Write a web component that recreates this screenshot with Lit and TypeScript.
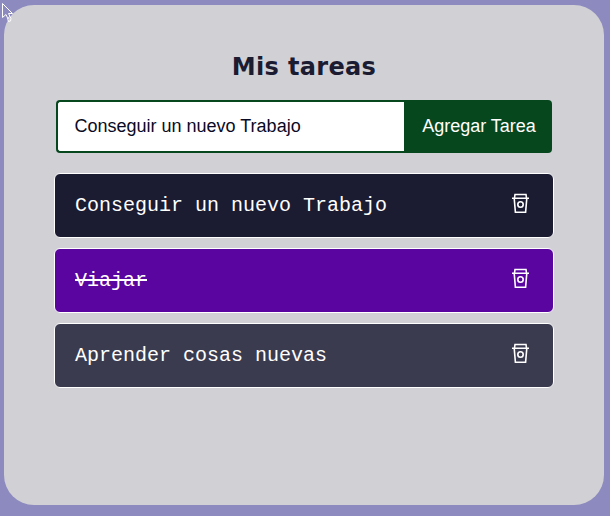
import { LitElement, html, css } from "lit";
import { customElement, property, state } from "lit/decorators.js";
import { classMap } from "lit/directives/class-map.js";

interface Task {
  text: string;
  tone: "navy" | "purple" | "slate";
  done: boolean;
}

@customElement("task-item")
class TaskItem extends LitElement {
  @property({ attribute: false }) task!: Task;

  static styles = css`
    :host { display: block; }
    .item {
      box-sizing: border-box;
      height: 65px;
      display: flex;
      align-items: center;
      justify-content: space-between;
      padding: 0 19px 0 20px;
      border: 1px solid #fff;
      border-radius: 6px;
      color: #fff;
    }
    .navy { background: #1b1b32; }
    .purple { background: #5a05a0; }
    .slate { background: #3b3b4f; }
    .text {
      font: 20px/24px "Courier New", "Liberation Mono", monospace;
      white-space: pre;
    }
    .done .text { text-decoration: line-through; }
    .remove {
      display: flex;
      padding: 0;
      margin: 0 2px 5px 0;
      border: 0;
      background: none;
      color: inherit;
    }
    svg { display: block; }
  `;

  render() {
    const { text, tone, done } = this.task;
    return html`
      <div class=${classMap({ item: true, [tone]: true, done })}>
        <span class="text">${text}</span>
        <button class="remove" aria-label="Eliminar">
          <svg width="24" height="24" viewBox="0 0 24 24" fill="none" stroke="currentColor" stroke-width="1.6">
            <path d="M4 7.300h17M6.500 7 7 3.500h11l.5 3.500M6.200 7.300l1.200 14h10.200l1.200-14" />
            <circle cx="12.500" cy="13.500" r="2.700" />
          </svg>
        </button>
      </div>
    `;
  }
}

@customElement("app-root")
class AppRoot extends LitElement {
  @state() private tasks: Task[] = [
    { text: "Conseguir un nuevo Trabajo", tone: "navy", done: false },
    { text: "Viajar", tone: "purple", done: true },
    { text: "Aprender cosas nuevas", tone: "slate", done: false },
  ];

  static styles = css`
    :host {
      display: block;
      position: relative;
      box-sizing: border-box;
      width: 610px;
      height: 516px;
      padding: 5px 6px 11px 4px;
      background: #8c8abe;
      overflow: hidden;
    }
    .card {
      box-sizing: border-box;
      height: 500px;
      padding: 47px 50px 0;
      border-radius: 30px;
      background: #d0d0d5;
    }
    h1 {
      margin: 0;
      font: bold 24px/30px "DejaVu Sans", Verdana, sans-serif;
      letter-spacing: 0.35px;
      text-align: center;
      color: #1b1b32;
    }
    .form { display: flex; height: 53px; margin: 18px 2px 20px; }
    .field, .add {
      box-sizing: border-box;
      height: 53px;
      margin: 0;
      font: 18px "Liberation Sans", Arial, sans-serif;
    }
    .field {
      flex: 1;
      min-width: 0;
      padding: 0 16px 0 16.500px;
      border: 2px solid #07471e;
      border-right: 0;
      border-radius: 4px 0 0 4px;
      background: #fff;
      color: #0a0a23;
      outline: 0;
    }
    .add {
      width: 148px;
      padding: 0 0 0 2px;
      border: 0;
      border-radius: 0 4px 4px 0;
      background: #07471e;
      color: #fff;
    }
    .list { display: flex; flex-direction: column; gap: 10px; }
    .cursor { position: absolute; left: 0; top: 0; }
  `;

  render() {
    return html`
      <main class="card">
        <h1>Mis tareas</h1>
        <div class="form">
          <input class="field" .value=${"Conseguir un nuevo Trabajo"} />
          <button class="add">Agregar Tarea</button>
        </div>
        <div class="list">
          ${this.tasks.map((task) => html`<task-item .task=${task}></task-item>`)}
        </div>
      </main>
      <svg class="cursor" width="16" height="24" fill="none" stroke="#fff">
        <path d="M2.500 3.500v14l3.500-3 2 4.500M2.500 3.500l10 10H8.500l1.500 3" />
        <path d="M8.500 17.500l1.500-1 1 2-.5 2.500-2 .5-.7-2z" />
      </svg>
    `;
  }
}
